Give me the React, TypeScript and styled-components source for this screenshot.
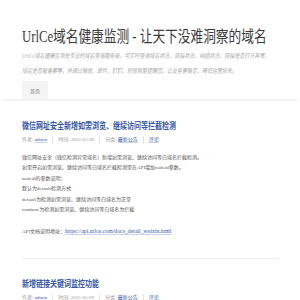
import React from "react";
import styled, { createGlobalStyle, css } from "styled-components";

const GlobalStyle = createGlobalStyle`
  html, body {
    margin: 0;
    padding: 0;
    background: #fff;
  }
  body {
    font-family: "Liberation Serif", "Noto Sans CJK SC", serif;
    color: #555;
  }
`;

// the reference is a little taller than it is wide, so stretch the bigger text
const tall = css`
  transform: scaleY(1.25);
  transform-origin: left center;
`;

const Header = styled.header`
  padding: 27px 22px 0;
`;

const SiteTitle = styled.h1`
  margin: 0;
  font-size: 12.7px;
  line-height: 20px;
  font-weight: normal;
  color: #3a3a3a;
  white-space: nowrap;
  ${tall}
`;

const SiteDesc = styled.p`
  margin: 5px 0 0;
  padding-right: 8px;
  font-size: 5px;
  line-height: 12px;
  color: #aaa;
  font-style: italic;
  ${tall}
`;

const Nav = styled.nav`
  display: flex;
  margin: 5px 3px 0;
  padding-left: 19px;
  border-bottom: 2px solid #f3f3f3;
`;

const NavItem = styled.a`
  display: flex;
  align-items: center;
  justify-content: center;
  width: 26px;
  height: 18px;
  background: #f4f4f4;
  font-size: 5px;
  color: #777;
  text-decoration: none;
`;

const Main = styled.main`
  padding: 0 22px;
`;

const Post = styled.article<{ last?: boolean }>`
  padding: 19px 0 ${({ last }) => (last ? "0" : "20px")};
  border-bottom: ${({ last }) => (last ? "none" : "1px solid #eee")};
`;

const PostTitle = styled.h2`
  margin: 0;
  font-size: 7px;
  line-height: 12px;
  font-weight: bold;
  color: #3556a8;
  white-space: nowrap;
  ${tall}
`;

const Meta = styled.div`
  display: flex;
  align-items: center;
  margin-top: 4px;
  font-size: 5px;
  line-height: 8px;
  color: #999;
`;

const MetaItem = styled.span`
  padding: 0 5px;
  border-left: 1px solid #e6e6e6;

  &:first-child {
    padding-left: 0;
    border-left: none;
  }
`;

const MetaLink = styled.a`
  color: #3556a8;
  text-decoration: underline;
  text-decoration-color: #c9d3ee;
`;

const Body = styled.div`
  margin-top: 9px;
  font-size: 5px;
  line-height: 10.4px;
  color: #555;
`;

const Para = styled.p`
  margin: 0;
  & + & {
    margin-top: 11px;
  }
`;

const Link = styled.a`
  font-size: 5.8px;
  color: #3556a8;
  text-decoration: underline;
  text-decoration-color: #c9d3ee;
`;

type PostData = {
  title: string;
  date: string;
  lines?: string[];
  api?: string;
};

const posts: PostData[] = [
  {
    title: "微信网址安全新增如需浏览、继续访问等拦截检测",
    date: "2025-05-09",
    lines: [
      "微信网址安全（微信检测异常域名）新增如需浏览、继续访问等白域名拦截检测。",
      "如需开启如需浏览、继续访问等白域名拦截检测需在API增加nodeid参数。",
      "nodeid的参数说明：",
      "默认为default检测方式",
      "default为检测如需浏览、继续访问等白域名为正常",
      "continue为检测如需浏览、继续访问等白域名为拦截",
    ],
    api: "https://api.urlce.com/docs_detail_weixin.html",
  },
  {
    title: "新增链接关键词监控功能",
    date: "2025-05-09",
  },
];

function PostMeta({ date }: { date: string }) {
  return (
    <Meta>
      <MetaItem>
        作者: <MetaLink href="#">admin</MetaLink>
      </MetaItem>
      <MetaItem>时间: {date}</MetaItem>
      <MetaItem>
        分类: <MetaLink href="#">最新公告</MetaLink>
      </MetaItem>
      <MetaItem>
        <MetaLink href="#">评论</MetaLink>
      </MetaItem>
    </Meta>
  );
}

export default function App() {
  return (
    <>
      <GlobalStyle />
      <Header>
        <SiteTitle>UrlCe域名健康监测 - 让天下没难洞察的域名</SiteTitle>
        <SiteDesc>
          UrlCe域名健康监测是专业的域名查询服务商，可实时查询域名状态、链接状态、网络状态、链接是否打开异常，域名是否被备案等，并通过微信、邮件、钉钉、短信频繁提醒您，让业务更稳定，降低运营损失。
        </SiteDesc>
      </Header>
      <Nav>
        <NavItem href="#">首页</NavItem>
      </Nav>
      <Main>
        {posts.map((p, i) => (
          <Post key={p.title} last={i === posts.length - 1}>
            <PostTitle>{p.title}</PostTitle>
            <PostMeta date={p.date} />
            {p.lines && (
              <Body>
                <Para>
                  {p.lines.map((l, j) => (
                    <React.Fragment key={j}>
                      {l}
                      {j < p.lines!.length - 1 && <br />}
                    </React.Fragment>
                  ))}
                </Para>
                <Para>
                  API文档说明地址：<Link href="#">{p.api}</Link>
                </Para>
              </Body>
            )}
          </Post>
        ))}
      </Main>
    </>
  );
}
